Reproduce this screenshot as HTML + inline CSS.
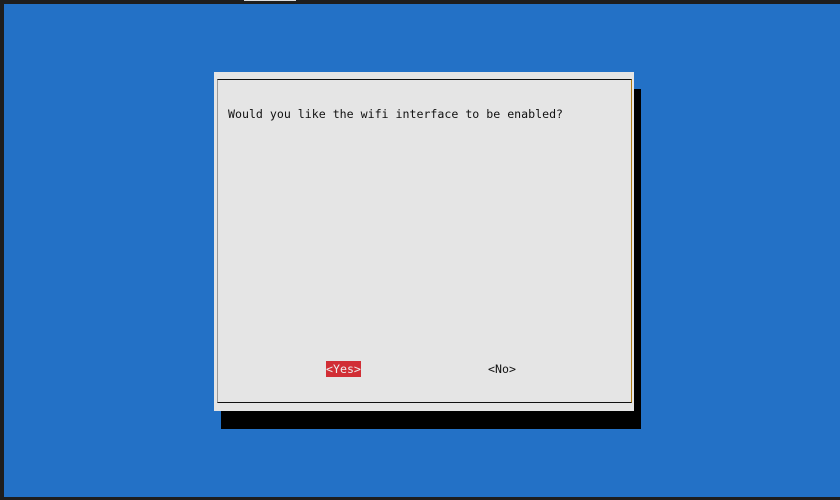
<!DOCTYPE html>
<html><head><style>
body{margin:0;width:840px;height:500px;background:#1e1e1e;position:relative;overflow:hidden;font-family:"DejaVu Sans Mono","Liberation Mono",monospace;font-size:11.6px}
.bg{position:absolute;left:4px;top:4px;width:836px;height:493px;background:#2371c6}
.tab{position:absolute;left:244px;top:0;width:52px;height:1px;background:#ddd}
.sh{position:absolute;left:221px;top:89px;width:420px;height:340px;background:#000}
.dl{position:absolute;left:214px;top:72px;width:420px;height:339px;background:#e5e5e5}
.in{position:absolute;left:217px;top:79px;width:413px;height:322px;border-top:1px solid #111;border-bottom:1px solid #111;border-left:1px solid #999;border-right:1px solid #b07a10}
.t{position:absolute;left:228px;top:106px;line-height:16px;color:#111;white-space:pre}
.y{position:absolute;left:326px;top:361px;height:16px;line-height:16px;background:#d12e35;color:#eee;padding:0}
.n{position:absolute;left:488px;top:361px;line-height:16px;color:#111}
</style></head><body>
<div class="tab"></div>
<div class="bg"></div>
<div class="sh"></div>
<div class="dl"></div>
<div class="in"></div>
<div class="t">Would you like the wifi interface to be enabled?</div>
<div class="y">&lt;Yes&gt;</div>
<div class="n">&lt;No&gt;</div>
</body></html>
